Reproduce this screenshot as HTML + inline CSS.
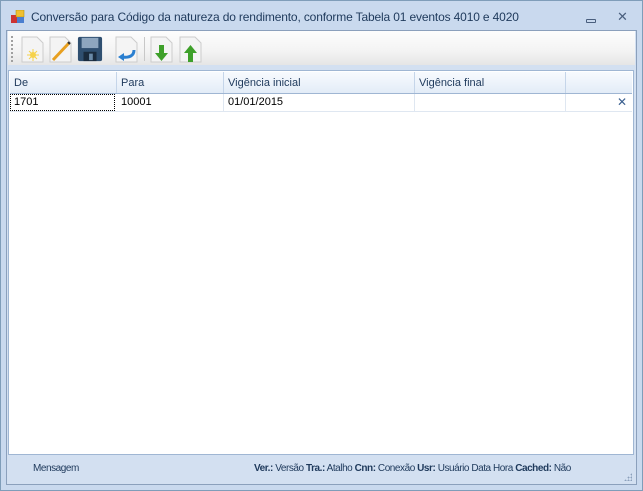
<!DOCTYPE html>
<html><head><meta charset="utf-8"><style>
*{margin:0;padding:0;box-sizing:border-box}
body{width:643px;height:491px;background:#c4d5eb;font-family:Tahoma,"Liberation Sans",sans-serif;font-size:11px;color:#1e395b;position:relative;overflow:hidden}
.win{position:absolute;left:0;top:0;width:643px;height:491px;border:1px solid #7f9db9;background:#c9d9ee}
.title{position:absolute;left:31px;top:10px;font-size:12px;color:#1e395b;letter-spacing:-0.15px}
.frame{position:absolute;left:6px;top:30px;width:631px;height:455px;border:1px solid #8ba0bc;background:#d3e0f1}
.tb{position:absolute;left:8px;top:31px;width:627px;height:34px;background:linear-gradient(#fdfdfd,#f3f3f3 60%,#e6e6e6)}
.grid{position:absolute;left:8px;top:70px;width:626px;height:385px;background:#fff;border:1px solid #9fb6d3}
.hdr{position:absolute;left:1px;top:1px;height:22px;width:622px;background:linear-gradient(#f7fafe,#e3ecf7);border-bottom:1px solid #9fb6d3}
.c{position:absolute;top:0;height:100%;padding:5px 0 0 4px;border-right:1px solid #c5d5e9;color:#1e395b;font-size:11px}
.row{position:absolute;left:1px;top:23px;height:18px;width:622px;border-bottom:1px solid #dfe7f1}
.row .c{padding-top:2px;color:#000;border-right:1px solid #dfe7f1}
.sb{position:absolute;top:463px;font-size:10px;color:#1e395b;white-space:nowrap;letter-spacing:-0.45px}
.ic{position:absolute;top:35px;width:26px;height:28px}
</style></head><body>
<div class="win"></div>
<svg style="position:absolute;left:11px;top:10px" width="14" height="14"><rect x="0" y="5" width="6" height="8" fill="#c33"/><rect x="5" y="0" width="8" height="7" fill="#f0c030" stroke="#a80" stroke-width=".5"/><rect x="6" y="7" width="7" height="6" fill="#4a7fd0"/></svg>
<div class="title">Conversão para Código da natureza do rendimento, conforme Tabela 01 eventos 4010 e 4020</div>
<div style="position:absolute;left:586px;top:19px;width:10px;height:4px;border:1px solid #4a5f7e;border-radius:1px"></div>
<div style="position:absolute;left:617px;top:9px;font-size:13px;color:#4a5f7e">✕</div>
<div class="frame"></div>
<div class="tb"></div>
<div style="position:absolute;left:11px;top:36px;width:2px;height:26px;border-left:2px dotted #a0a0a0"></div>
<svg class="ic" style="left:20px" viewBox="0 0 26 28"><path d="M2 2h15l6 6v19H2z" fill="#f4f4f4" stroke="#ccc"/><circle cx="13" cy="20" r="3" fill="#f6d24a"/><path d="M13 14v12M7 20h12M9 16l8 8M17 16l-8 8" stroke="#f6d24a" stroke-width="1"/></svg>
<svg class="ic" style="left:48px" viewBox="0 0 26 28"><path d="M2 2h15l6 6v19H2z" fill="#f4f4f4" stroke="#ccc"/><path d="M5 25L21 8" stroke="#e8a020" stroke-width="3"/><path d="M20 7l2 2" stroke="#333" stroke-width="2"/></svg>
<svg class="ic" style="left:77px" viewBox="0 0 28 28"><rect x="1" y="1" width="26" height="26" rx="2" fill="#2f4f70"/><rect x="5" y="2" width="18" height="11" fill="#8ea6bf"/><rect x="7" y="17" width="14" height="10" fill="#1a2b3d"/><rect x="13" y="19" width="4" height="7" fill="#6a8aa8"/></svg>
<svg class="ic" style="left:114px" viewBox="0 0 26 28"><path d="M2 2h15l6 6v19H2z" fill="#f4f4f4" stroke="#ccc"/><path d="M20 15c0 6-5 8-12 7" stroke="#2a7fd0" stroke-width="3" fill="none"/><path d="M4 22l6-4v8z" fill="#2a7fd0"/></svg>
<div style="position:absolute;left:144px;top:37px;width:1px;height:24px;background:#c8c8c8"></div>
<svg class="ic" style="left:149px" viewBox="0 0 26 28"><path d="M2 2h15l6 6v19H2z" fill="#f4f4f4" stroke="#ccc"/><path d="M10 10h5v8h4l-6.5 8L6 18h4z" fill="#3ea02a"/></svg>
<svg class="ic" style="left:178px" viewBox="0 0 26 28"><path d="M2 2h15l6 6v19H2z" fill="#f4f4f4" stroke="#ccc"/><path d="M10 27h5v-9h4l-6.5-8L6 18h4z" fill="#3ea02a"/></svg>
<div class="grid">
<div class="hdr">
<div class="c" style="left:0;width:107px">De</div>
<div class="c" style="left:107px;width:107px">Para</div>
<div class="c" style="left:214px;width:191px">Vigência inicial</div>
<div class="c" style="left:405px;width:151px">Vigência final</div>
<div class="c" style="left:556px;width:66px;border-right:none"></div>
</div>
<div class="row">
<div class="c" style="left:0;width:105px;border:1px dotted #000;padding-top:1px;padding-left:3px">1701</div>
<div class="c" style="left:107px;width:107px">10001</div>
<div class="c" style="left:214px;width:191px">01/01/2015</div>
<div class="c" style="left:405px;width:151px"></div>
<div class="c" style="left:556px;width:66px;border-right:none;text-align:right;padding-right:5px;color:#3a5f8f;font-size:12px;padding-top:1px">✕</div>
</div>
</div>
<div class="sb" style="left:33px">Mensagem</div>
<div class="sb" style="left:254px"><b>Ver.:</b> Versão <b>Tra.:</b> Atalho <b>Cnn:</b> Conexão <b>Usr:</b> Usuário Data Hora <b>Cached:</b> Não</div>
<div style="position:absolute;left:624px;top:473px;width:8px;height:8px;background:radial-gradient(circle,#8ba0bc 40%,transparent 45%) 0 0/3px 3px;clip-path:polygon(100% 0,100% 100%,0 100%)"></div>
</body></html>
